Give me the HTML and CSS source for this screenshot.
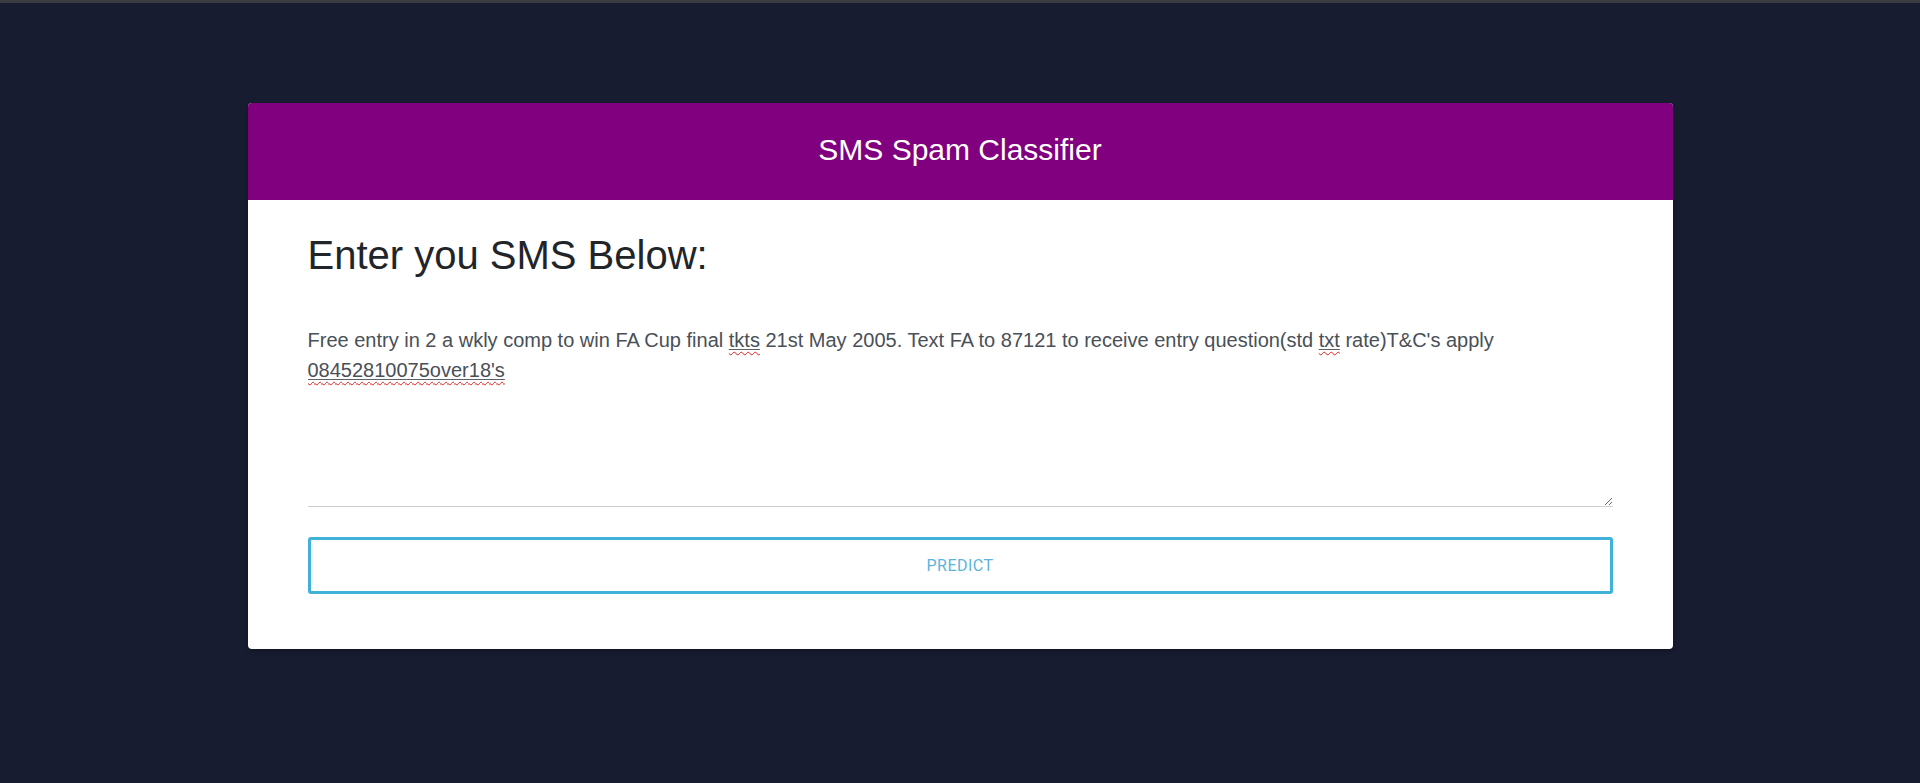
FILE: index.html
```html
<!DOCTYPE html>
<html lang="en">
<head>
<meta charset="utf-8">
<title>SMS Spam Classifier</title>
<link rel="stylesheet" href="styles.css">
</head>
<body>
<div class="topbar"></div>
<main class="card">
  <header class="card-header">
    <h2 class="card-title">SMS Spam Classifier</h2>
  </header>
  <section class="card-body">
    <h1 class="prompt">Enter you SMS Below:</h1>
    <div class="sms-input">Free entry in 2 a wkly comp to win FA Cup final <span class="misspelt"><span class="misspelt-line">tkts</span></span> 21st May 2005. Text FA to 87121 to receive entry question(std <span class="misspelt"><span class="misspelt-line">txt</span></span> rate)T&amp;C's apply <span class="misspelt"><span class="misspelt-line">08452810075over18's</span></span></div>
    <button class="predict-btn" type="button">Predict</button>
  </section>
</main>
</body>
</html>
```

FILE: styles.css
```css
* { box-sizing: border-box; }

html, body {
  margin: 0;
  padding: 0;
  height: 100%;
}

body {
  background: #181c30;
  font-family: "Liberation Sans", Arial, sans-serif;
}

.topbar {
  height: 3px;
  background: #3b3c3f;
}

.card {
  width: 1425px;
  margin: 100px auto 0;
  background: #ffffff;
  border-radius: 4px;
  overflow: hidden;
  box-shadow: 0 2px 4px rgba(0, 0, 0, 0.3);
}

.card-header {
  background: #800080;
  height: 97px;
  padding-bottom: 4px;
  display: flex;
  align-items: center;
  justify-content: center;
}

.card-title {
  margin: 0;
  color: #ffffff;
  font-weight: 400;
  font-size: 30px;
  line-height: 1;
}

.card-body {
  padding: 31px 60px 55px;
  display: flex;
  flex-direction: column;
}

.prompt {
  margin: 0;
  font-weight: 400;
  font-size: 40px;
  line-height: 48px;
  color: #212529;
}

.sms-input {
  margin-top: 30px;
  height: 198px;
  padding: 16px 0;
  font-size: 20px;
  line-height: 30px;
  color: #495057;
  border-bottom: 1px solid #cfcfcf;
  overflow: auto;
  resize: vertical;
}

.misspelt {
  text-decoration: underline wavy #e0201b;
  text-decoration-thickness: 1px;
  text-underline-offset: 4px;
}

.misspelt-line {
  text-decoration: underline solid #5a6068;
  text-decoration-thickness: 1px;
  text-underline-offset: 2px;
}

.predict-btn {
  margin-top: 30px;
  height: 57px;
  width: 100%;
  background: #ffffff;
  border: 3px solid #40b1d8;
  border-radius: 3px;
  color: #5ab4db;
  font-family: Roboto, "Liberation Sans", sans-serif;
  font-size: 16px;
  letter-spacing: 0.5px;
  text-transform: uppercase;
  cursor: pointer;
}
```
